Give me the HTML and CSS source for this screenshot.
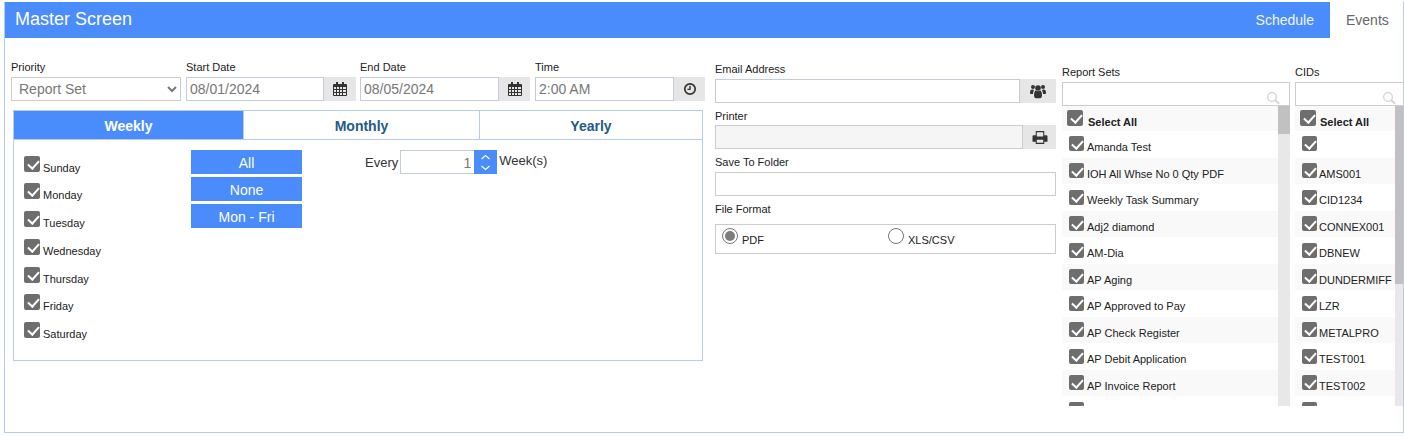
FILE: index.html
```html
<!DOCTYPE html>
<html lang="en">
<head>
<meta charset="utf-8">
<title>Master Screen</title>
<link rel="stylesheet" href="styles.css">
</head>
<body>
<svg class="defs" width="0" height="0" aria-hidden="true">
  <symbol id="i-cal" viewBox="0 0 14 14">
    <path fill="#333" fill-rule="evenodd" d="M3 0h2v2h4V0h2v2h2a1 1 0 0 1 1 1v10a1 1 0 0 1-1 1H1a1 1 0 0 1-1-1V3a1 1 0 0 1 1-1h2zM1 5v2h2V5zm3 0v2h2V5zm3 0v2h2V5zm3 0v2h3V5zM1 8v2h2V8zm3 0v2h2V8zm3 0v2h2V8zm3 0v2h3V8zM1 11v2h2v-2zm3 0v2h2v-2zm3 0v2h2v-2zm3 0v2h3v-2z"/>
  </symbol>
  <symbol id="i-search" viewBox="0 0 13 12">
    <circle cx="5" cy="5" r="4.300" fill="none" stroke="#d2d2d2" stroke-width="1.300"/>
    <path d="M8.200 8.200l4 3.500" stroke="#d2d2d2" stroke-width="1.800"/>
  </symbol>
</svg>
<div class="app">
  <header class="bar">
    <h1 class="title">Master Screen</h1>
    <nav class="nav">
      <span class="nav-link">Schedule</span>
      <span class="nav-link active">Events</span>
    </nav>
  </header>
  <main class="main">
    <section class="col-schedule">
      <div class="fields">
        <div class="field">
          <label class="lbl">Priority</label>
          <select class="select"><option>Report Set</option></select>
        </div>
        <div class="field">
          <label class="lbl">Start Date</label>
          <div class="group"><input class="input" value="08/01/2024"><span class="addon"><svg class="ico"><use href="#i-cal"/></svg></span></div>
        </div>
        <div class="field">
          <label class="lbl">End Date</label>
          <div class="group"><input class="input" value="08/05/2024"><span class="addon"><svg class="ico"><use href="#i-cal"/></svg></span></div>
        </div>
        <div class="field">
          <label class="lbl">Time</label>
          <div class="group"><input class="input" value="2:00 AM"><span class="addon"><svg class="ico" viewBox="0 0 14 14"><circle cx="7" cy="7" r="5.2" fill="none" stroke="#333" stroke-width="1.7"/><path d="M7 3.800V7.400H4.400" fill="none" stroke="#333" stroke-width="1.400"/></svg></span></div>
        </div>
      </div>
      <div class="panel">
        <div class="tabs">
          <div class="tab on">Weekly</div>
          <div class="tab mid">Monthly</div>
          <div class="tab last">Yearly</div>
        </div>
        <div class="panel-body">
          <div class="days">
            <div class="day"><i class="cb"></i><span>Sunday</span></div>
            <div class="day"><i class="cb"></i><span>Monday</span></div>
            <div class="day"><i class="cb"></i><span>Tuesday</span></div>
            <div class="day"><i class="cb"></i><span>Wednesday</span></div>
            <div class="day"><i class="cb"></i><span>Thursday</span></div>
            <div class="day"><i class="cb"></i><span>Friday</span></div>
            <div class="day"><i class="cb"></i><span>Saturday</span></div>
          </div>
          <div class="quick">
            <button class="btn">All</button>
            <button class="btn">None</button>
            <button class="btn">Mon - Fri</button>
          </div>
          <div class="every">
            <span>Every</span>
            <input class="num" value="1">
            <span class="spin">
              <svg viewBox="0 0 23 24" width="23" height="24"><path d="M7.500 9l4-3.500 4 3.500M7.500 16l4 3.500 4-3.500" fill="none" stroke="#fff" stroke-width="1.200"/></svg>
            </span>
            <span class="unit">Week(s)</span>
          </div>
        </div>
      </div>
    </section>

    <section class="col-delivery">
      <label class="lbl">Email Address</label>
      <div class="group"><input class="input"><span class="addon wide"><svg class="ico big" viewBox="0 0 16 14"><g fill="#333"><circle cx="3" cy="2.500" r="2"/><circle cx="13" cy="2.500" r="2"/><circle cx="8" cy="3.500" r="2.800"/><path d="M0 8.500c0-3 1-3.500 2-3.500s1.500.5 2 .7C3.500 6.500 3 8 3 9.500H1c-.6 0-1-.4-1-1zM16 8.500c0-3-1-3.500-2-3.500s-1.500.5-2 .7c.5.800 1 2.300 1 3.800h2c.6 0 1-.4 1-1z"/><path d="M4 11c0-3 .8-5 2-5 .6.400 1.200.8 2 .8s1.400-.4 2-.8c1.200 0 2 2 2 5 0 1.800-1 2.800-2 2.800H6c-1 0-2-1-2-2.800z"/></g></svg></span></div>
      <label class="lbl l2">Printer</label>
      <div class="group"><input class="input off"><span class="addon narrow"><svg class="ico big" viewBox="0 0 14 14"><path fill="#333" fill-rule="evenodd" d="M3 1h8v4h2a1 1 0 0 1 1 1v5h-3v2H3v-2H0V6a1 1 0 0 1 1-1h2zm1 1v4h6V2zm0 7v3h6V9z"/></svg></span></div>
      <label class="lbl l3">Save To Folder</label>
      <input class="input solo">
      <label class="lbl l4">File Format</label>
      <div class="formats">
        <div class="format first"><i class="radio on"></i><span>PDF</span></div>
        <div class="format"><i class="radio"></i><span>XLS/CSV</span></div>
      </div>
    </section>

    <section class="col-picker sets">
      <label class="lbl">Report Sets</label>
      <div class="search"><svg class="search-ico"><use href="#i-search"/></svg></div>
      <div class="listwrap">
        <div class="list">
          <div class="row head"><i class="cb"></i><span>Select All</span></div>
          <div class="row"><i class="cb sm"></i><span>Amanda Test</span></div>
          <div class="row alt"><i class="cb sm"></i><span>IOH All Whse No 0 Qty PDF</span></div>
          <div class="row"><i class="cb sm"></i><span>Weekly Task Summary</span></div>
          <div class="row alt"><i class="cb sm"></i><span>Adj2 diamond</span></div>
          <div class="row"><i class="cb sm"></i><span>AM-Dia</span></div>
          <div class="row alt"><i class="cb sm"></i><span>AP Aging</span></div>
          <div class="row"><i class="cb sm"></i><span>AP Approved to Pay</span></div>
          <div class="row alt"><i class="cb sm"></i><span>AP Check Register</span></div>
          <div class="row"><i class="cb sm"></i><span>AP Debit Application</span></div>
          <div class="row alt"><i class="cb sm"></i><span>AP Invoice Report</span></div>
          <div class="row"><i class="cb sm"></i><span></span></div>
        </div>
        <div class="track"><div class="thumb"></div></div>
      </div>
    </section>

    <section class="col-picker cids">
      <label class="lbl">CIDs</label>
      <div class="search"><svg class="search-ico"><use href="#i-search"/></svg></div>
      <div class="listwrap">
        <div class="list">
          <div class="row head"><i class="cb"></i><span>Select All</span></div>
          <div class="row"><i class="cb sm"></i><span></span></div>
          <div class="row alt"><i class="cb sm"></i><span>AMS001</span></div>
          <div class="row"><i class="cb sm"></i><span>CID1234</span></div>
          <div class="row alt"><i class="cb sm"></i><span>CONNEX001</span></div>
          <div class="row"><i class="cb sm"></i><span>DBNEW</span></div>
          <div class="row alt"><i class="cb sm"></i><span>DUNDERMIFF</span></div>
          <div class="row"><i class="cb sm"></i><span>LZR</span></div>
          <div class="row alt"><i class="cb sm"></i><span>METALPRO</span></div>
          <div class="row"><i class="cb sm"></i><span>TEST001</span></div>
          <div class="row alt"><i class="cb sm"></i><span>TEST002</span></div>
          <div class="row"><i class="cb sm"></i><span></span></div>
        </div>
        <div class="track"><div class="thumb"></div></div>
      </div>
    </section>
  </main>
</div>
</body>
</html>
```

FILE: styles.css
```css
* { box-sizing: border-box; }
html, body { margin: 0; padding: 0; background: #fff; overflow: hidden; }
body { font-family: "Liberation Sans", Arial, sans-serif; color: #222; width: 1404px; height: 436px; }
.defs { position: absolute; }

.app {
  margin: 2px 0 0 4px;
  width: 1400px;
  height: 431px;
  border: 1px solid #b9cce6;
  border-top: 0;
  overflow: hidden;
}

.bar {
  height: 36px;
  background: #4a8cfb;
  display: flex;
  justify-content: space-between;
  color: #fff;
}
.title { margin: 0; padding: 7px 0 0 10px; font-size: 18px; line-height: 21px; font-weight: 400; }
.nav { display: flex; align-items: stretch; }
.nav-link { font-size: 14px; line-height: 36px; padding: 0 16px; color: #f2f6ff; }
.nav-link.active { width: 73px; padding: 0 0 0 16px; background: #fff; color: #666; }

.main { display: flex; align-items: flex-start; padding-left: 6px; }
.lbl { display: block; font-size: 11px; line-height: 14px; color: #222; }

.col-schedule { flex: none; width: 694px; margin-right: 10px; padding-top: 22px; }
.fields { display: flex; gap: 5px; }
.field { width: 170px; }
.field .lbl { margin-bottom: 3px; }
.field:nth-child(3) { margin-left: -1px; }
.field:nth-child(n+3) .addon { width: 31px; }

.select {
  display: block;
  width: 170px;
  height: 24px;
  font: 14px "Liberation Sans", Arial, sans-serif;
  color: #777;
  background: #fff;
  border: 1px solid #ccc;
  padding: 0 0 0 3px;
}
.group { display: flex; height: 24px; }
.input {
  flex: 1;
  min-width: 0;
  height: 24px;
  border: 1px solid #c4ccd8;
  padding: 0 3px;
  font: 14px "Liberation Sans", Arial, sans-serif;
  color: #777;
  background: #fff;
  outline: 0;
  border-radius: 0;
}
.input.off { background: #f5f5f5; border-color: #ccc; }
.input.solo { display: block; width: 100%; border-color: #ccc; }
.addon { width: 32px; flex: none; background: #e6e6e6; display: flex; align-items: center; justify-content: center; }
.addon.wide { width: 36px; }
.addon.narrow { width: 33px; }
.ico { width: 14px; height: 14px; display: block; }
.ico.big { width: 16px; height: 15px; }

.panel { margin: 9px 0 0 2px; width: 690px; height: 251px; border: 1px solid #b9cce6; }
.tabs { display: flex; height: 29px; border-bottom: 1px solid #b9cce6; font-size: 14px; font-weight: 700; text-align: center; line-height: 31px; color: #1f5b85; }
.tab.on { width: 229px; background: #4a8cfb; color: #fff; }
.tab.mid { width: 237px; border-left: 1px solid #b9cce6; border-right: 1px solid #b9cce6; }
.tab.last { flex: 1; }
.panel-body { display: flex; align-items: flex-start; padding: 10px 0 0 10px; }

.cb { display: block; flex: none; width: 16px; height: 16px; background: #6e6e6e; border-radius: 2px; position: relative; }
.cb::after {
  content: "";
  position: absolute;
  left: 5.500px;
  top: 2px;
  width: 5px;
  height: 9px;
  border: solid #fff;
  border-width: 0 2.200px 2.200px 0;
  transform: rotate(42deg);
}
.cb.sm { width: 15px; height: 15px; }
.cb.sm::after { left: 5px; top: 1.500px; }

.days { width: 167px; padding-top: 5.500px; }
.day { display: flex; height: 27.750px; font-size: 11px; line-height: 13px; }
.day span { margin: 6px 0 0 3px; }

.quick { width: 111px; display: flex; flex-direction: column; gap: 3px; }
.btn { height: 24px; border: 0; padding: 2px 0 0; background: #4a8cfb; color: #fff; font: 14px "Liberation Sans", Arial, sans-serif; }

.every { display: flex; align-items: center; height: 24px; margin-left: 63px; font-size: 13px; color: #333; }
.num { width: 74px; height: 24px; margin-left: 2px; border: 1px solid #c4ccd8; border-right: 0; text-align: right; padding: 2px 3px 0; font: 14px "Liberation Sans", Arial, sans-serif; color: #777; outline: 0; border-radius: 0; }
.spin { width: 23px; height: 24px; background: #4a8cfb; }
.spin svg { display: block; }
.unit { margin-left: 2px; padding-bottom: 3px; }

.col-delivery { flex: none; width: 341px; margin-right: 6px; padding-top: 24px; }
.col-delivery > .lbl { margin-bottom: 3px; }
.col-delivery > .lbl.l2 { margin-top: 6px; margin-bottom: 2px; }
.col-delivery > .lbl.l3 { margin-top: 6px; }
.col-delivery > .lbl.l4 { margin-top: 6px; margin-bottom: 8px; }
.formats { display: flex; height: 30px; border: 1px solid #ccc; }
.format { display: flex; font-size: 11px; line-height: 13px; padding-top: 3px; }
.format.first { width: 172px; padding-left: 6px; }
.format span { margin: 6px 0 0 4px; }
.radio { display: block; flex: none; width: 16px; height: 16px; border-radius: 50%; border: 1px solid #777; background: #fff; position: relative; }
.radio.on::after { content: ""; position: absolute; inset: 2px; border-radius: 50%; background: #7d7d7d; }

.col-picker { padding-top: 27px; flex: none; }
.sets { width: 228px; margin-right: 5px; }
.cids { width: 120px; }
.col-picker > .lbl { margin-bottom: 3px; }
.search { height: 24px; border: 1px solid #ccc; position: relative; }
.search-ico { position: absolute; right: 9px; top: 9px; width: 13px; height: 12px; }
.cids .search-ico { right: 18px; }
.listwrap { display: flex; height: 300px; overflow: hidden; }
.list { flex: 1; min-width: 0; overflow: hidden; }
.track { flex: none; width: 12px; background: #e8e8e8; }
.thumb { height: 28px; background: #c1c1c1; }
.cids .track { width: 9px; margin-right: 11px; }
.cids .thumb { height: 178px; }

.row { display: flex; height: 26.500px; padding: 5.200px 0 0 7px; font-size: 11px; line-height: 13px; white-space: nowrap; }
.row span { margin: 4.800px 0 0 3px; }
.row.alt { background: #f9f9f9; }
.row.head { height: 25.200px; background: #f9f9f9; padding: 4px 0 0 5px; font-weight: 700; }
.row.head span { margin: 5.500px 0 0 5px; }
.row.head + .row { height: 26.800px; }
.cids .row span { margin-left: 2px; }
.cids .row.head span { margin-left: 4px; }
```
